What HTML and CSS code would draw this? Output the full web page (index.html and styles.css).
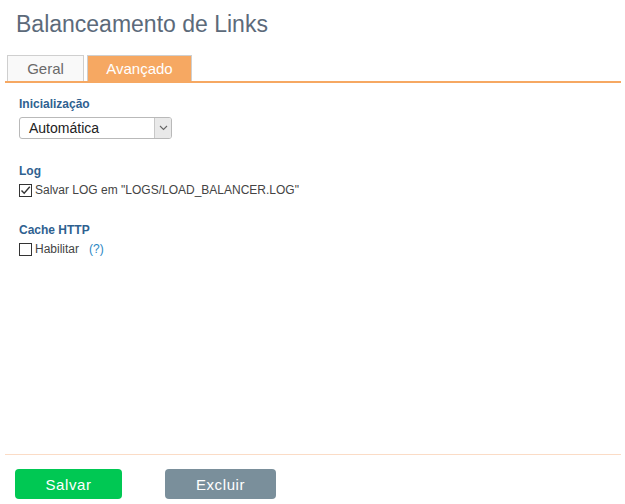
FILE: index.html
```html
<!DOCTYPE html>
<html lang="pt">
<head>
<meta charset="utf-8">
<title>Balanceamento de Links</title>
<link rel="stylesheet" href="styles.css">
</head>
<body>
<div class="page">
  <h1 class="title">Balanceamento de Links</h1>
  <div class="tabs">
    <span class="tab">Geral</span>
    <span class="tab active">Avançado</span>
  </div>
  <main class="content">
    <section class="group">
      <div class="label">Inicialização</div>
      <div class="select">
        <span class="select-value">Automática</span>
        <span class="select-arrow">
          <svg width="9" height="6" viewBox="0 0 9 6"><path d="M1 1 L4.5 4.5 L8 1" fill="none" stroke="#666" stroke-width="1.1"/></svg>
        </span>
      </div>
    </section>
    <section class="group">
      <div class="label">Log</div>
      <label class="check">
        <span class="box">
          <svg width="11" height="11" viewBox="0 0 11 11"><path d="M1.5 5.5 L4.2 8.3 L9.8 1.8" fill="none" stroke="#333" stroke-width="1.4"/></svg>
        </span>
        Salvar LOG em "LOGS/LOAD_BALANCER.LOG"
      </label>
    </section>
    <section class="group">
      <div class="label">Cache HTTP</div>
      <label class="check">
        <span class="box"></span>
        Habilitar <a class="help">(?)</a>
      </label>
    </section>
  </main>
  <footer class="footer">
    <button class="btn btn-save">Salvar</button>
    <button class="btn btn-delete">Excluir</button>
  </footer>
</div>
</body>
</html>
```
FILE: styles.css
```css
html, body {
  margin: 0;
  padding: 0;
  background: #fff;
}
body {
  font-family: "Liberation Sans", Arial, sans-serif;
}
.page {
  display: flex;
  flex-direction: column;
  height: 504px;
  padding: 0 4px 0 5px;
  box-sizing: border-box;
}
.title {
  margin: 0;
  padding: 9px 0 0 11px;
  font-size: 23px;
  line-height: 30px;
  font-weight: normal;
  color: #5c6a7a;
}
.tabs {
  display: flex;
  gap: 3px;
  margin-top: 16px;
  padding-left: 2px;
  border-bottom: 2px solid #f6a862;
}
.tab {
  height: 25px;
  line-height: 26px;
  border: 1px solid #cfcfcf;
  border-bottom: none;
  background: #f9f9f9;
  color: #6a6a6a;
  font-size: 15px;
  text-align: center;
  width: 75px;
}
.tab.active {
  width: 103px;
  background: #f6a862;
  color: #fff;
}
.content {
  flex: 1;
  padding: 13px 0 0 14px;
}
.group {
  margin-bottom: 24px;
}
.label {
  font-size: 12px;
  line-height: 16px;
  font-weight: bold;
  color: #2f6190;
}
.select {
  display: flex;
  width: 153px;
  height: 22px;
  margin-top: 5px;
  border: 1px solid #b9b9b9;
  border-radius: 3px;
  box-sizing: border-box;
  overflow: hidden;
  background: #fff;
}
.select-value {
  flex: 1;
  padding-left: 9px;
  font-size: 14px;
  line-height: 20px;
  color: #222;
}
.select-arrow {
  width: 16px;
  display: flex;
  align-items: center;
  justify-content: center;
  background: #e9e9e9;
  border-left: 1px solid #c8c8c8;
}
.check {
  display: flex;
  align-items: center;
  gap: 3px;
  margin-top: 3px;
  font-size: 12px;
  line-height: 16px;
  color: #444;
}
.box {
  width: 13px;
  height: 13px;
  box-sizing: border-box;
  border: 1px solid #333;
  display: flex;
  align-items: center;
  justify-content: center;
  background: #fff;
}
.help {
  margin-left: 7px;
  color: #2a87c4;
}
.footer {
  border-top: 1px solid #fbdcc6;
  display: flex;
  gap: 43px;
  padding: 14px 0 5px 10px;
}
.btn {
  height: 30px;
  border: none;
  border-radius: 4px;
  color: #fff;
  font-family: "Liberation Sans", Arial, sans-serif;
  font-size: 15px;
  letter-spacing: 0.6px;
  padding: 0;
}
.btn-save {
  width: 107px;
  background: #00c853;
}
.btn-delete {
  width: 111px;
  background: #7a8f9b;
}
```
